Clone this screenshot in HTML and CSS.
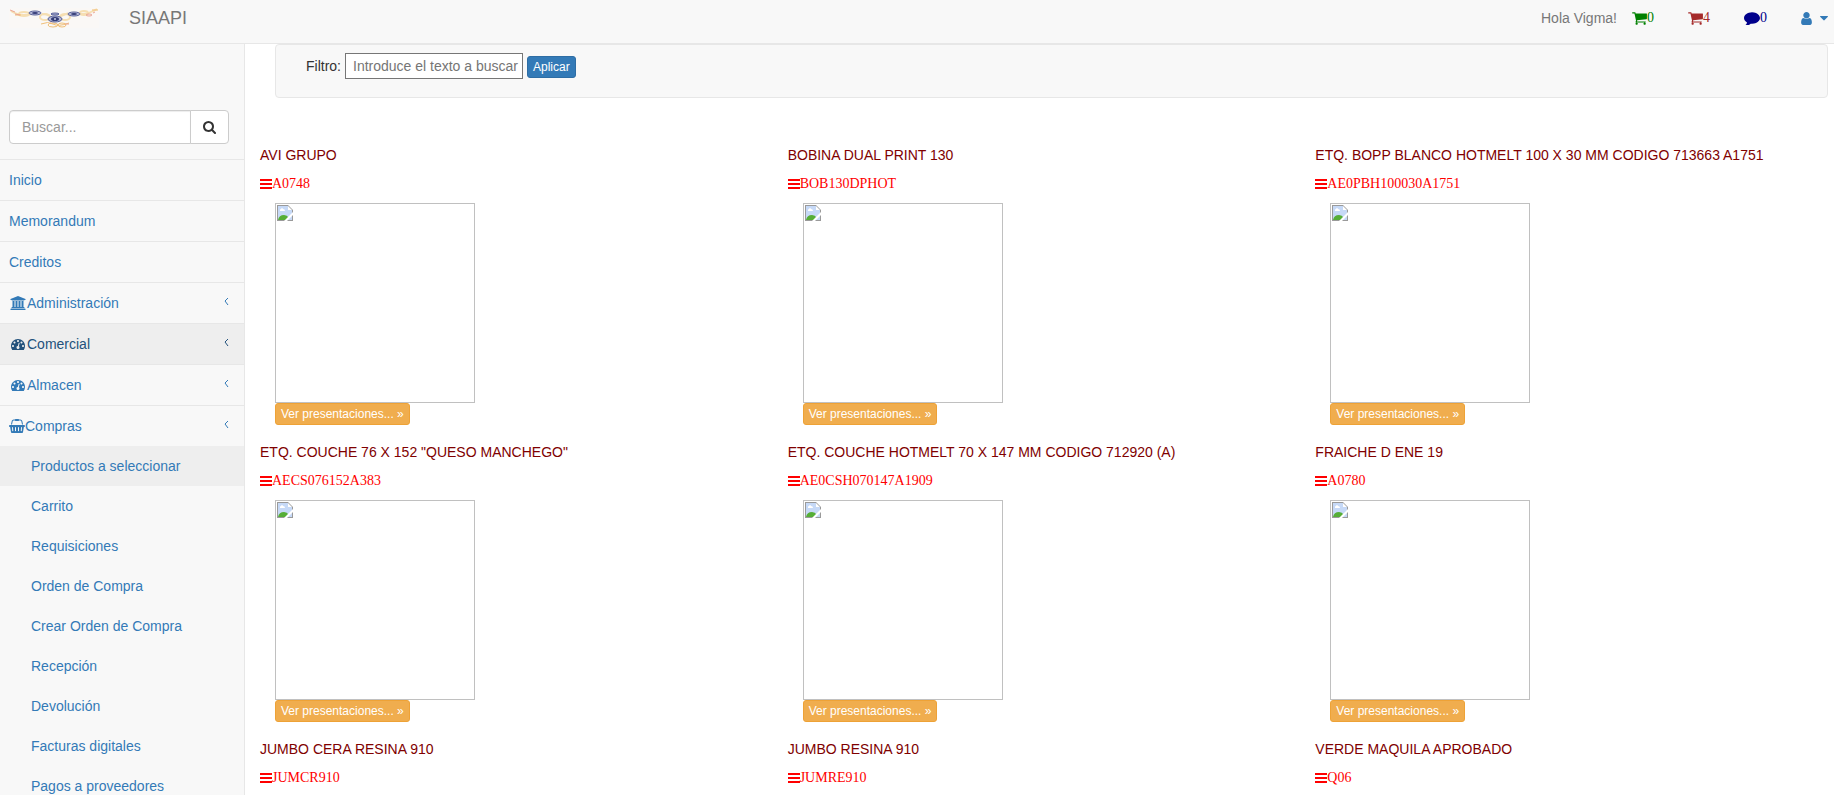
FILE: index.html
```html
<!DOCTYPE html>
<html lang="es">
<head>
<meta charset="utf-8">
<title>SIAAPI</title>
<link rel="stylesheet" href="styles.css">
</head>
<body>
<svg class="sprite" aria-hidden="true">
  <symbol id="cart" viewBox="64 0 1664 1792"><path d="M704 1536q0 52-38 90t-90 38-90-38-38-90 38-90 90-38 90 38 38 90zm896 0q0 52-38 90t-90 38-90-38-38-90 38-90 90-38 90 38 38 90zm128-1088v512q0 24-16.5 42.5t-40.5 21.5l-1044 122q13 60 13 70 0 16-24 64h920q26 0 45 19t19 45-19 45-45 19h-1024q-26 0-45-19t-19-45q0-11 8-31.5t16-36 21.500-40 15.500-29.500l-177-823h-204q-26 0-45-19t-19-45 19-45 45-19h256q16 0 28.500 6.500t19.500 15.500 13 24.500 8 26 5.500 29.500 4.500 26h1201q26 0 45 19t19 45z"/></symbol>
  <symbol id="comment" viewBox="0 128 1792 1536"><path d="M1792 896q0 174-120 321.500t-326 233-450 85.500q-70 0-145-8-198 175-460 242-49 14-114 22-17 2-30.500-9t-17.500-29v-1q-3-4-.5-12t2-10 4.500-9.500l6-9 7-8.500 8-9q7-8 31-34.500t34.500-38 31-39.500 32.500-51 27-59 26-76q-157-89-247.500-220t-90.500-281q0-130 71-248.500t191-204.500 286-136.500 348-50.500q244 0 450 85.500t326 233 120 321.500z"/></symbol>
  <symbol id="user" viewBox="256 0 1280 1792"><path d="M1536 1399q0 109-62.500 187t-150.500 78h-854q-88 0-150.500-78t-62.500-187q0-85 8.500-160.500t31.500-152 58.500-131 94-89 134.500-34.500q131 128 313 128t313-128q76 0 134.500 34.500t94 89 58.500 131 31.500 152 8.500 160.500zm-256-887q0 159-112.500 271.500t-271.500 112.500-271.500-112.500-112.500-271.500 112.500-271.500 271.500-112.500 271.500 112.500 112.500 271.500z"/></symbol>
  <symbol id="caret" viewBox="384 0 1024 1792"><path d="M1408 704q0 26-19 45l-448 448q-19 19-45 19t-45-19l-448-448q-19-19-19-45t19-45 45-19h896q26 0 45 19t19 45z"/></symbol>
  <symbol id="search" viewBox="64 0 1664 1792"><path d="M1216 832q0-185-131.500-316.500t-316.500-131.500-316.500 131.500-131.500 316.500 131.500 316.500 316.500 131.500 316.500-131.500 131.500-316.500zm512 832q0 52-38 90t-90 38q-54 0-90-38l-343-342q-179 124-399 124-143 0-273.500-55.500t-225-150-150-225-55.500-273.500 55.500-273.500 150-225 225-150 273.500-55.500 273.500 55.500 225 150 150 225 55.500 273.500q0 220-124 399l343 343q37 37 37 90z"/></symbol>
  <symbol id="bars" viewBox="0 0 12 12"><rect y="1" width="12" height="2"/><rect y="5" width="12" height="2"/><rect y="9" width="12" height="2"/></symbol>
  <symbol id="gauge" viewBox="0 0 1792 1792"><path d="M384 1152q0-53-37.500-90.500t-90.500-37.500-90.500 37.500-37.500 90.500 37.500 90.500 90.500 37.500 90.500-37.500 37.500-90.500zm192-448q0-53-37.500-90.500t-90.500-37.500-90.500 37.500-37.500 90.500 37.500 90.500 90.500 37.500 90.500-37.500 37.500-90.500zm428 481l101-382q6-26-7.500-48.500t-38.500-29.500-48 6.500-30 39.500l-101 382q-60 5-107 43.500t-63 98.500q-20 77 20 146t117 89 146-20 89-117q16-60-6-117t-72-91zm660-33q0-53-37.500-90.500t-90.500-37.500-90.500 37.500-37.500 90.500 37.500 90.500 90.500 37.500 90.500-37.500 37.500-90.500zm-640-640q0-53-37.500-90.500t-90.500-37.500-90.500 37.500-37.500 90.500 37.500 90.500 90.500 37.500 90.500-37.500 37.500-90.500zm448 192q0-53-37.500-90.500t-90.500-37.500-90.500 37.500-37.500 90.500 37.500 90.500 90.500 37.500 90.500-37.500 37.500-90.500zm320 448q0 261-141 483-19 29-54 29h-1402q-35 0-54-29-141-221-141-483 0-182 71-348t191-286 286-191 348-71 348 71 286 191 191 286 71 348z"/></symbol>
  <symbol id="bank" viewBox="0 0 1920 1792"><path d="M960 0l960 384v128h-128q0 26-20 45t-49 19H197q-28 0-48-19t-21-45H0V384zM256 640h256v768h128V640h256v768h128V640h256v768h128V640h256v768h59q28 0 48 19t21 45v64H128v-64q0-26 21-45t48-19h59zM1851 1600q28 0 48 19t21 45v128H0v-128q0-26 21-45t48-19z"/></symbol>
  <symbol id="basket" viewBox="0 0 2048 1792"><path fill-rule="evenodd" d="M1920 768q53 0 90 37t38 91-38 90-90 38h-15l-115 662q-8 46-44 76t-82 30H384q-46 0-82-30t-44-76l-115-662h-15q-53 0-90-38T0 896t38-91 90-37zM485 1568q26-2 44-22t15-46l-32-416q-2-26-22-43t-46-15-43 22-16 46l32 416q2 25 20 41t44 17zm411-64v-416q0-26-19-45t-45-19-45 19-19 45v416q0 26 19 45t45 19 45-19 19-45zm384 0v-416q0-26-19-45t-45-19-45 19-19 45v416q0 26 19 45t45 19 45-19 19-45zm352 5l32-416q2-26-16-46t-43-22-46 15-22 43l-32 416q-2 26 16 46t43 22h5q25-1 43-17t20-41zM476 292l-93 412H251l101-441q19-88 89-144t161-56h167q0-26 19-45t45-19h384q26 0 45 19t19 45h167q90 0 160 56t90 144l101 441h-132l-93-412q-11-44-46-72t-80-28h-167q0 26-19 45t-45 19H833q-26 0-45-19t-19-45H602q-45 0-80 28t-46 72z"/></symbol>
  <symbol id="angle" viewBox="0 0 6 14"><path d="M4 2L1 5l3 4" fill="none" stroke="currentColor" stroke-width="1"/></symbol>
  <symbol id="broken" viewBox="0 0 16 16"><path d="M0 0h11l5 5v11H0z" fill="#9a9a9a"/><path d="M1 1h10v4h4v10H1z" fill="#c6d9f7"/><path d="M11 1l4 4h-4z" fill="#fff"/><path d="M3 5q0-1 1-1 1-2 2 0 2 0 2 2H3z" fill="#fff"/><path d="M1 15q1-5 6-5 3 0 5 3l-2 2z" fill="#56ae37"/><path d="M7 16l9-9v3l-6 6z" fill="#fff"/></symbol>
</svg>

<header class="topbar">
  <a class="logo" href="#" aria-label="SIAAPI">
    <svg viewBox="0 0 90 20" width="90" height="20">
      <rect width="90" height="20" fill="#faf8f6"/>
      <g fill="none" stroke="#f6dfb2" stroke-width="2">
        <path d="M2 3q9 6 20 3M33 6q5 0 8 2M52 8q4-1 7-3M72 6q8 0 16-5"/>
        <ellipse cx="15" cy="6" rx="5" ry="2"/><ellipse cx="36" cy="9" rx="5" ry="3"/><ellipse cx="56" cy="9" rx="5" ry="3"/><ellipse cx="75" cy="5" rx="4" ry="2"/>
      </g>
      <g fill="none" stroke="#f0bf78" stroke-width="1"><path d="M32 16q7-3 12 0t16-1"/><ellipse cx="44" cy="17" rx="5" ry="2"/><ellipse cx="53" cy="17" rx="4" ry="2"/><path d="M6 7h6M83 2h6"/></g>
      <g fill="none" stroke="#eba696" stroke-width="1"><path d="M1 2l5 2M6 6l5 1M41 14l5-1M56 16h4M84 5l2-1"/><ellipse cx="80" cy="7" rx="3" ry="1"/></g>
      <g fill="#b3b7d6" stroke="#59629a" stroke-width="1"><ellipse cx="26" cy="5" rx="6" ry="2"/><ellipse cx="65" cy="6" rx="6" ry="2"/><ellipse cx="46" cy="6" rx="4" ry="1"/><ellipse cx="46" cy="11" rx="7" ry="3"/></g>
      <g fill="#343d78"><ellipse cx="26" cy="5" rx="3" ry="1"/><ellipse cx="65" cy="6" rx="3" ry="1"/><ellipse cx="46" cy="11" rx="4" ry="2"/></g>
      <ellipse cx="46" cy="11" rx="1" ry="1" fill="#c9cce2"/>
    </svg>
  </a>
  <a class="brand" href="#">SIAAPI</a>
  <nav class="tools">
    <span class="hello">Hola Vigma!</span>
    <a class="tool green" href="#"><svg class="icon i15"><use href="#cart"/></svg>0</a>
    <a class="tool brown" href="#"><svg class="icon i15"><use href="#cart"/></svg>4</a>
    <a class="tool navy" href="#"><svg class="icon i16"><use href="#comment"/></svg>0</a>
    <button class="account" type="button" aria-label="Cuenta"><svg class="icon i11"><use href="#user"/></svg><svg class="icon i8"><use href="#caret"/></svg></button>
  </nav>
</header>

<div class="shell">
  <aside class="sidebar">
    <form class="search">
      <input type="text" placeholder="Buscar..." aria-label="Buscar">
      <button type="button" aria-label="Buscar"><svg class="icon i13"><use href="#search"/></svg></button>
    </form>
    <ul class="menu">
      <li><a href="#">Inicio</a></li>
      <li><a href="#">Memorandum</a></li>
      <li><a href="#">Creditos</a></li>
      <li><a href="#"><svg class="icon menu-icon"><use href="#bank"/></svg>Administración<svg class="arrow"><use href="#angle"/></svg></a></li>
      <li><a class="hover" href="#"><svg class="icon menu-icon"><use href="#gauge"/></svg>Comercial<svg class="arrow"><use href="#angle"/></svg></a></li>
      <li><a href="#"><svg class="icon menu-icon"><use href="#gauge"/></svg>Almacen<svg class="arrow"><use href="#angle"/></svg></a></li>
      <li><a href="#"><svg class="icon i16"><use href="#basket"/></svg>Compras<svg class="arrow"><use href="#angle"/></svg></a>
        <ul class="submenu">
          <li><a class="active" href="#">Productos a seleccionar</a></li>
          <li><a href="#">Carrito</a></li>
          <li><a href="#">Requisiciones</a></li>
          <li><a href="#">Orden de Compra</a></li>
          <li><a href="#">Crear Orden de Compra</a></li>
          <li><a href="#">Recepción</a></li>
          <li><a href="#">Devolución</a></li>
          <li><a href="#">Facturas digitales</a></li>
          <li><a href="#">Pagos a proveedores</a></li>
        </ul>
      </li>
    </ul>
  </aside>

  <main class="content">
    <form class="filter">
      <label for="filtro">Filtro:</label>
      <input id="filtro" type="text" placeholder="Introduce el texto a buscar">
      <button type="button">Aplicar</button>
    </form>
    <div class="products">
      <article class="product"><h2>AVI GRUPO</h2><p class="code"><svg class="icon i12"><use href="#bars"/></svg>A0748</p><div class="photo"><svg><use href="#broken"/></svg></div><button type="button">Ver presentaciones... »</button></article>
      <article class="product"><h2>BOBINA DUAL PRINT 130</h2><p class="code"><svg class="icon i12"><use href="#bars"/></svg>BOB130DPHOT</p><div class="photo"><svg><use href="#broken"/></svg></div><button type="button">Ver presentaciones... »</button></article>
      <article class="product"><h2>ETQ. BOPP BLANCO HOTMELT 100 X 30 MM CODIGO 713663 A1751</h2><p class="code"><svg class="icon i12"><use href="#bars"/></svg>AE0PBH100030A1751</p><div class="photo"><svg><use href="#broken"/></svg></div><button type="button">Ver presentaciones... »</button></article>
      <article class="product"><h2>ETQ. COUCHE 76 X 152 "QUESO MANCHEGO"</h2><p class="code"><svg class="icon i12"><use href="#bars"/></svg>AECS076152A383</p><div class="photo"><svg><use href="#broken"/></svg></div><button type="button">Ver presentaciones... »</button></article>
      <article class="product"><h2>ETQ. COUCHE HOTMELT 70 X 147 MM CODIGO 712920 (A)</h2><p class="code"><svg class="icon i12"><use href="#bars"/></svg>AE0CSH070147A1909</p><div class="photo"><svg><use href="#broken"/></svg></div><button type="button">Ver presentaciones... »</button></article>
      <article class="product"><h2>FRAICHE D ENE 19</h2><p class="code"><svg class="icon i12"><use href="#bars"/></svg>A0780</p><div class="photo"><svg><use href="#broken"/></svg></div><button type="button">Ver presentaciones... »</button></article>
      <article class="product"><h2>JUMBO CERA RESINA 910</h2><p class="code"><svg class="icon i12"><use href="#bars"/></svg>JUMCR910</p></article>
      <article class="product"><h2>JUMBO RESINA 910</h2><p class="code"><svg class="icon i12"><use href="#bars"/></svg>JUMRE910</p></article>
      <article class="product"><h2>VERDE MAQUILA APROBADO</h2><p class="code"><svg class="icon i12"><use href="#bars"/></svg>Q06</p></article>
    </div>
  </main>
</div>
</body>
</html>
```

FILE: styles.css
```css
* { box-sizing: border-box; }

html { height: 100%; }

body {
  margin: 0;
  height: 100%;
  display: flex;
  flex-direction: column;
  overflow: hidden;
  background: #fff;
  color: #333;
  font: 14px/20px "Liberation Sans", Arial, sans-serif;
}

a { color: #337ab7; text-decoration: none; }
ul { margin: 0; padding: 0; list-style: none; }
button, input { font-family: inherit; margin: 0; }

.sprite { display: none; }
.icon { flex: none; height: 14px; fill: currentColor; }
.i8 { width: 8px; }
.i11 { width: 11px; height: 15px; }
.i12 { width: 12px; height: 12px; }
.i13 { width: 13px; }
.i15 { width: 15px; height: 16px; }
.i16 { width: 16px; }
.menu-icon { width: 18px; padding: 0 1px; }

.topbar {
  flex: none;
  display: flex;
  align-items: flex-start;
  height: 44px;
  padding: 8px 6px 0 9px;
  background: #f8f8f8;
  border-bottom: 1px solid #e7e7e7;
}
.logo svg { display: block; }
.brand { margin-left: 30px; color: #777; font-size: 18px; }
.tools { display: flex; margin-left: auto; }
.hello { margin-right: 15px; color: #777; }
.tool {
  display: flex;
  align-items: center;
  margin-right: 34px;
  font-family: "Liberation Serif", "Times New Roman", serif;
}
.green { color: green; }
.brown { color: brown; }
.navy { color: darkblue; }
.account {
  display: flex;
  align-items: center;
  gap: 8px;
  padding: 0;
  border: 0;
  background: none;
  color: #337ab7;
}

.shell { flex: 1; min-height: 0; display: flex; }

.sidebar {
  flex: none;
  width: 245px;
  padding-top: 66px;
  background: #f8f8f8;
  border-right: 1px solid #e7e7e7;
}
.search { display: flex; margin: 0 15px 15px 9px; }
.search input {
  flex: 1;
  min-width: 0;
  height: 34px;
  padding: 6px 12px;
  border: 1px solid #ccc;
  border-radius: 4px 0 0 4px;
  font-size: 14px;
  box-shadow: inset 0 1px 1px rgba(0, 0, 0, .075);
}
.search input::placeholder { color: #999; }
.search button {
  width: 39px;
  margin-left: -1px;
  padding: 0 12px;
  border: 1px solid #ccc;
  border-radius: 0 4px 4px 0;
  background: #fff;
  color: #333;
}
.search button svg { display: block; }

.menu > li { border-top: 1px solid #e7e7e7; }
.menu > li > a {
  display: flex;
  align-items: center;
  height: 40px;
  padding: 0 14px 0 9px;
}
.menu > li > .hover { background: #eee; color: #23527c; }
.arrow { width: 6px; height: 14px; margin-left: auto; }
.submenu a { display: block; padding: 10px 15px 10px 31px; }
.submenu .active { background: #eee; }

.content { flex: 1; min-width: 0; padding: 0 0 0 15px; overflow: hidden; }
.filter {
  display: flex;
  align-items: flex-start;
  height: 54px;
  margin: 0 6px 47px 15px;
  padding: 8px 30px;
  border: 1px solid #e7e7e7;
  border-radius: 4px;
  background: #f8f8f8;
}
.filter label { padding: 3px 4px 0 0; }
.filter input {
  width: 178px;
  height: 26px;
  padding: 1px 0 1px 7px;
  border: 1px solid #767676;
  font-size: 14px;
}
.filter input::placeholder { color: #757575; }
.filter button {
  height: 22px;
  margin: 3px 0 0 4px;
  padding: 1px 5px;
  border: 1px solid #2e6da4;
  border-radius: 3px;
  background: #337ab7;
  color: #fff;
  font-size: 12px;
  line-height: 18px;
}

.products { display: grid; grid-template-columns: repeat(3, 1fr); margin-right: -9px; }
.product { min-height: 297px; }
.product h2 { margin: 0; color: maroon; font-size: 14px; font-weight: 400; white-space: nowrap; }
.code {
  display: flex;
  align-items: center;
  height: 20px;
  margin: 9px 0;
  color: red;
  font-family: "Liberation Serif", "Times New Roman", serif;
}
.photo { width: 200px; height: 200px; margin-left: 15px; padding: 1px; border: 1px solid #c0c0c0; }
.photo svg { display: block; width: 16px; height: 16px; }
.product button {
  display: block;
  height: 22px;
  margin-left: 15px;
  padding: 1px 5px;
  border: 1px solid #eea236;
  border-radius: 3px;
  background: #f0ad4e;
  color: #fff;
  font-size: 12px;
  line-height: 18px;
}
```
